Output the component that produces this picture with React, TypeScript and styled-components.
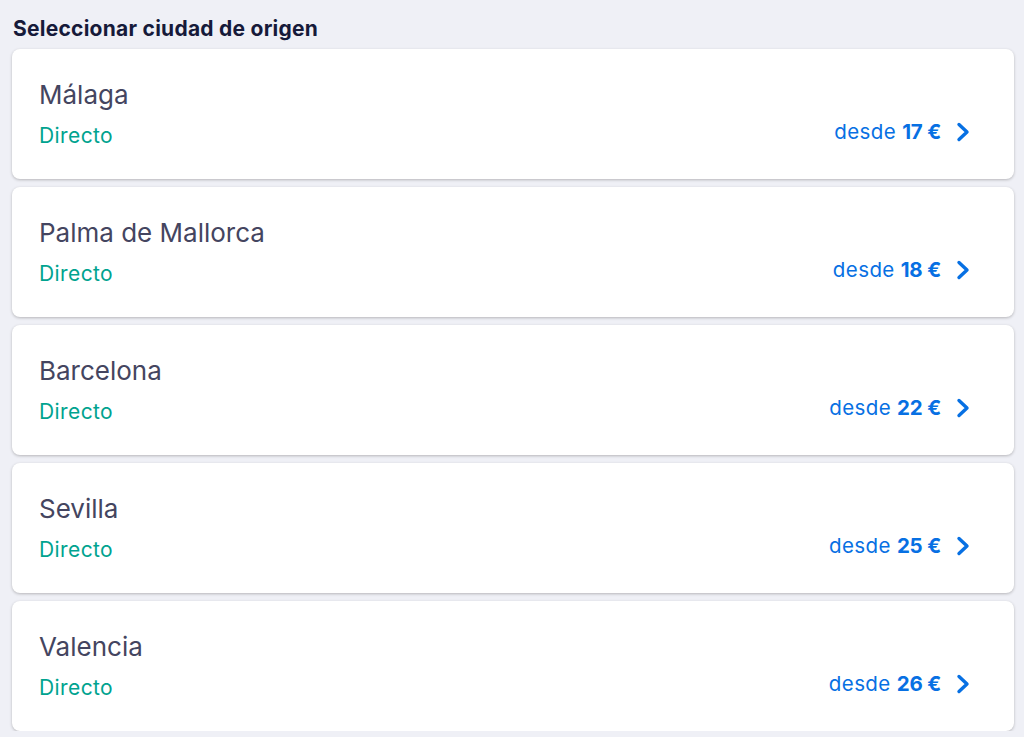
import styled, { createGlobalStyle } from "styled-components";

const origins = [
  { city: "Málaga", price: 17 },
  { city: "Palma de Mallorca", price: 18 },
  { city: "Barcelona", price: 22 },
  { city: "Sevilla", price: 25 },
  { city: "Valencia", price: 26 },
];

export default function App() {
  return (
    <>
      <GlobalStyle />
      <Page>
        <Title>Seleccionar ciudad de origen</Title>
        <List>
          {origins.map((o) => (
            <Card key={o.city}>
              <City>{o.city}</City>
              <Row>
                <Stops>Directo</Stops>
                <Price>
                  desde <strong>{o.price} €</strong>
                  <Chevron width="14" height="20" viewBox="0 0 14 20" aria-hidden>
                    <polyline points="3,2.5 11,10 3,17.5" />
                  </Chevron>
                </Price>
              </Row>
            </Card>
          ))}
        </List>
      </Page>
    </>
  );
}

const GlobalStyle = createGlobalStyle`
  html, body {
    margin: 0;
    background: #eff0f6;
  }
  body {
    font-family: Inter, "Noto Sans", Arial, sans-serif;
    -webkit-font-smoothing: antialiased;
  }
`;

const Page = styled.main`
  padding: 17px 10px 0 12px;
`;

const Title = styled.h2`
  margin: 0 0 0 1px;
  font-size: 21px;
  line-height: 24px;
  font-weight: 700;
  color: #161a3a;
  letter-spacing: 0.25px;
`;

const List = styled.div`
  margin-top: 8px;
  display: grid;
  gap: 8px;
`;

const Card = styled.div`
  height: 130px;
  box-sizing: border-box;
  padding: 30px 44px 0 27px;
  background: #fff;
  border-radius: 8px;
  box-shadow: 0 1px 3px rgba(37, 32, 31, 0.28);
  display: flex;
  flex-direction: column;
`;

const City = styled.div`
  font-size: 26px;
  line-height: 32px;
  color: #444560;
`;

const Row = styled.div`
  margin-top: 12px;
  display: flex;
  align-items: center;
  justify-content: space-between;
`;

const Stops = styled.span`
  font-size: 21px;
  line-height: 26px;
  color: #00a38f;
  letter-spacing: 0.4px;
`;

const Price = styled.span`
  display: flex;
  align-items: center;
  gap: 6px;
  margin-top: -9px;
  font-size: 20.5px;
  line-height: 24px;
  color: #0770e3;
  letter-spacing: 0.4px;

  strong {
    font-weight: 700;
    letter-spacing: -0.2px;
  }
`;

const Chevron = styled.svg`
  margin-left: 9px;
  fill: none;
  stroke: #0770e3;
  stroke-width: 3.4;
  stroke-linecap: round;
  stroke-linejoin: round;
`;
